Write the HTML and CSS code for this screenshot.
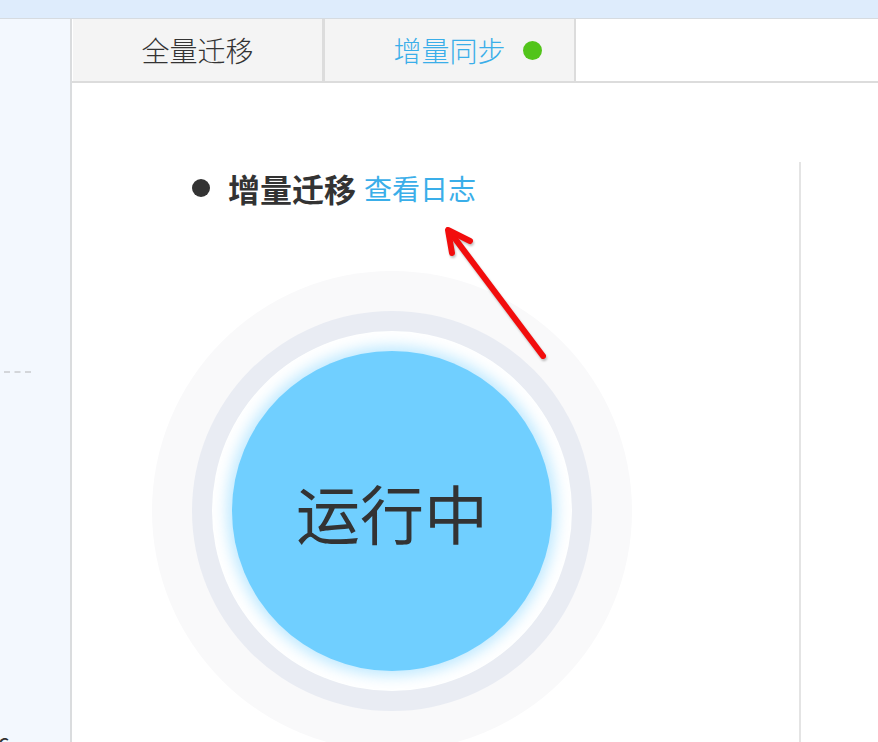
FILE: index.html
```html
<!DOCTYPE html>
<html lang="zh-CN">
<head>
    <meta charset="UTF-8">
    <title>增量同步</title>
    <link rel="stylesheet" href="styles.css">
</head>
<body>
    <div class="app">
        <!-- Top strip -->
        <div class="topbar"></div>

        <div class="layout">
            <!-- Sidebar -->
            <aside class="sidebar">
                <div class="side-divider"></div>
                <div class="side-label">c</div>
            </aside>

            <!-- Main -->
            <main class="main">
                <div class="tabs">
                    <div class="tab">全量迁移</div>
                    <div class="tab tab-active">增量同步 <span class="status-dot"></span></div>
                    <div class="tab-rest"></div>
                </div>

                <div class="content">
                    <section class="panel">
                        <div class="panel-title">
                            <span class="bullet"></span>
                            <span class="title-text">增量迁移</span>
                            <a href="#" class="log-link">查看日志</a>
                        </div>

                        <div class="ring-outer">
                            <div class="ring-mid">
                                <div class="ring-inner">
                                    <div class="ring-core">运行中</div>
                                </div>
                            </div>
                        </div>
                    </section>
                    <section class="panel-right"></section>
                </div>
            </main>
        </div>

        <!-- Annotation arrow -->
        <svg class="arrow" width="878" height="742" viewBox="0 0 878 742">
            <g fill="none" stroke="#f20d0d" stroke-width="6" stroke-linecap="round" stroke-linejoin="round">
                <path d="M543 356 L450 232"/>
                <path d="M470 241 L448 230 L452 253"/>
            </g>
        </svg>
    </div>
</body>
</html>
```

FILE: styles.css
```css
body {
    margin: 0;
    padding: 0;
    font-family: "Noto Sans CJK SC", "Noto Sans", sans-serif;
    background-color: #ffffff;
    color: #333333;
}

.app {
    position: relative;
    width: 878px;
    height: 742px;
    overflow: hidden;
}

.topbar {
    height: 18px;
    background-color: #deecfc;
    border-bottom: 1px solid #d6dbe0;
}

.layout {
    display: flex;
    height: 723px;
}

.sidebar {
    width: 70px;
    flex-shrink: 0;
    background-color: #f3f8fe;
    border-right: 2px solid #dadcde;
    display: flex;
    flex-direction: column;
}

.side-divider {
    margin-top: 352px;
    margin-left: 4px;
    width: 27px;
    border-top: 2px dashed #d3d6da;
}

.side-label {
    margin-top: 356px;
    margin-left: -2px;
    font-size: 22px;
    line-height: 22px;
    color: #333;
}

.main {
    flex: 1;
    display: flex;
    flex-direction: column;
    min-height: 0;
}

.tabs {
    display: flex;
    flex-shrink: 0;
    height: 62px;
    border-bottom: 2px solid #dcdcdc;
}

.tab {
    width: 249px;
    background-color: #f4f4f4;
    border-right: 3px solid #dcdcdc;
    display: flex;
    align-items: center;
    justify-content: center;
    font-size: 28px;
    font-weight: 300;
    color: #333;
}

.tab:first-child {
    margin-left: 1px;
}

.tab-active {
    box-sizing: border-box;
    width: 251px;
    border-right-width: 2px;
    padding-left: 36px;
    color: #3aaee9;
}

.status-dot {
    display: inline-block;
    width: 19px;
    height: 19px;
    border-radius: 50%;
    background-color: #52c41a;
    margin-left: 17px;
}

.tab-rest {
    flex: 1;
}

.content {
    flex: 1;
    display: flex;
    padding-top: 79px;
    min-height: 0;
}

.panel {
    width: 727px;
    border-right: 2px solid #e4e4e4;
    flex-shrink: 0;
}

.panel-right {
    flex: 1;
}

.panel-title {
    display: flex;
    align-items: center;
    height: 52px;
    padding-left: 120px;
}

.bullet {
    width: 18px;
    height: 18px;
    border-radius: 50%;
    background-color: #333;
    margin-right: 18px;
    flex-shrink: 0;
}

.title-text {
    font-size: 32px;
    font-weight: bold;
    color: #333;
}

.log-link {
    margin-left: 8px;
    font-size: 28px;
    color: #3aaee9;
    text-decoration: none;
}

.ring-outer {
    margin-top: 57px;
    margin-left: 80px;
    width: 400px;
    height: 400px;
    padding: 40px;
    border-radius: 50%;
    background-color: #f9f9fa;
}

.ring-mid {
    width: 360px;
    height: 360px;
    padding: 20px;
    border-radius: 50%;
    background-color: #e9ecf3;
}

.ring-inner {
    width: 340px;
    height: 340px;
    padding: 10px;
    border-radius: 50%;
    background-color: #ffffff;
    display: flex;
    align-items: center;
    justify-content: center;
}

.ring-core {
    width: 320px;
    height: 320px;
    border-radius: 50%;
    background-color: #70cfff;
    box-shadow: 0 0 14px 5px rgba(112, 207, 255, 0.45);
    display: flex;
    align-items: center;
    justify-content: center;
    font-size: 64px;
    font-weight: 400;
    color: #333;
}

.arrow {
    position: absolute;
    left: 0;
    top: 0;
    pointer-events: none;
    filter: drop-shadow(1px 2px 1px rgba(0, 0, 0, 0.25));
}
```
